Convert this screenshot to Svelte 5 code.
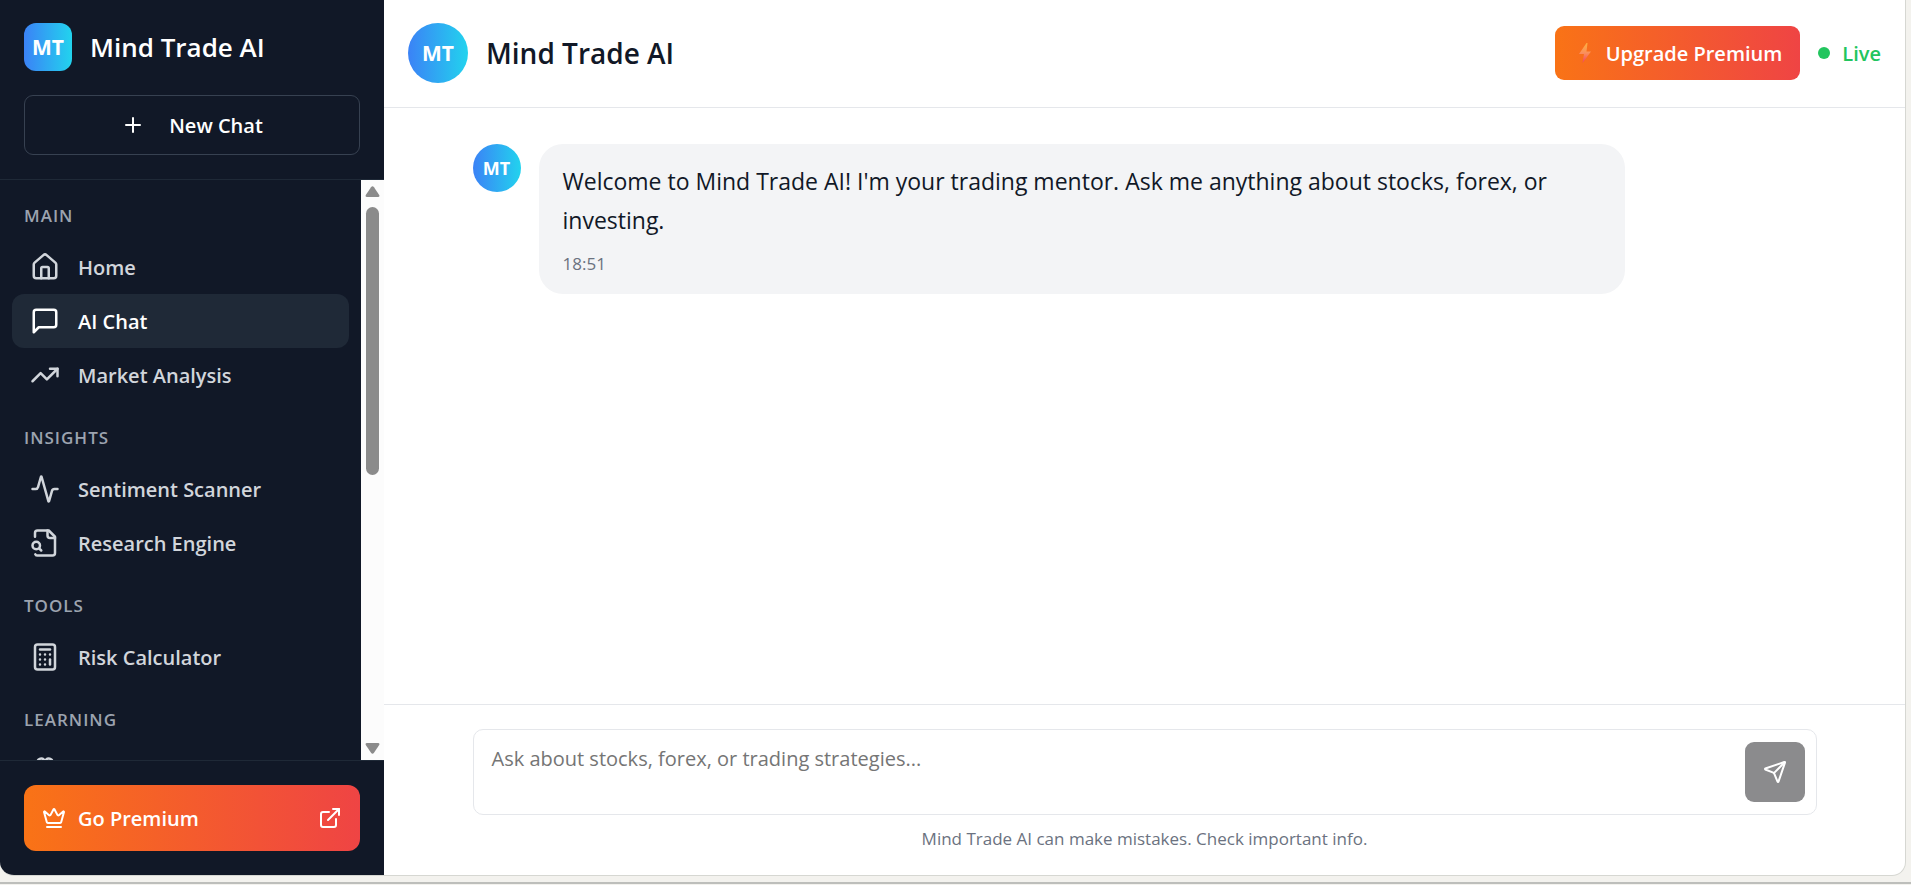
<script lang="ts">
	type Item = { label: string; icon: string };
	type Section = { title: string; items: Item[] };

	const sections: Section[] = [
		{
			title: 'Main',
			items: [
				{ label: 'Home', icon: 'home' },
				{ label: 'AI Chat', icon: 'chat' },
				{ label: 'Market Analysis', icon: 'trending' }
			]
		},
		{
			title: 'Insights',
			items: [
				{ label: 'Sentiment Scanner', icon: 'activity' },
				{ label: 'Research Engine', icon: 'fileSearch' }
			]
		},
		{ title: 'Tools', items: [{ label: 'Risk Calculator', icon: 'calculator' }] },
		{ title: 'Learning', items: [{ label: '', icon: 'brain' }] }
	];

	// stroke paths on a 24x24 grid
	const icons: Record<string, string[]> = {
		home: [
			'M15 21v-8a1 1 0 0 0-1-1h-4a1 1 0 0 0-1 1v8',
			'M3 10a2 2 0 0 1 .709-1.528l7-5.999a2 2 0 0 1 2.582 0l7 5.999A2 2 0 0 1 21 10v9a2 2 0 0 1-2 2H5a2 2 0 0 1-2-2z'
		],
		chat: ['M21 15a2 2 0 0 1-2 2H7l-4 4V5a2 2 0 0 1 2-2h14a2 2 0 0 1 2 2z'],
		trending: ['M22 7l-8.5 8.5-5-5L2 17', 'M16 7h6v6'],
		activity: [
			'M22 12h-2.48a2 2 0 0 0-1.93 1.46l-2.35 8.36a.25.25 0 0 1-.48 0L9.24 2.18a.25.25 0 0 0-.48 0l-2.35 8.36A2 2 0 0 1 4.49 12H2'
		],
		fileSearch: [
			'M14 2v4a2 2 0 0 0 2 2h4',
			'M4.268 21a2 2 0 0 0 1.727 1H18a2 2 0 0 0 2-2V7l-5-5H6a2 2 0 0 0-2 2v3',
			'M9 18l-1.5-1.5',
			'M8 14a3 3 0 1 1-6 0 3 3 0 0 1 6 0z'
		],
		calculator: [
			'M6 2h12a2 2 0 0 1 2 2v16a2 2 0 0 1-2 2H6a2 2 0 0 1-2-2V4a2 2 0 0 1 2-2z',
			'M8 6h8',
			'M16 14v4',
			'M16 10h.01M12 10h.01M8 10h.01M12 14h.01M8 14h.01M12 18h.01M8 18h.01'
		],
		brain: [
			'M12 5a3 3 0 1 0-5.997.125 4 4 0 0 0-2.526 5.77 4 4 0 0 0 .556 6.588A4 4 0 1 0 12 18Z',
			'M12 5a3 3 0 1 1 5.997.125 4 4 0 0 1 2.526 5.77 4 4 0 0 1-.556 6.588A4 4 0 1 1 12 18Z'
		],
		plus: ['M5 12h14', 'M12 5v14'],
		crown: [
			'M11.562 3.266a.5.5 0 0 1 .876 0L15.39 8.87a1 1 0 0 0 1.516.294L21.183 5.5a.5.5 0 0 1 .798.519l-2.834 10.246a1 1 0 0 1-.956.734H5.81a1 1 0 0 1-.957-.734L2.02 6.02a.5.5 0 0 1 .798-.519l4.276 3.664a1 1 0 0 0 1.516-.294z',
			'M5 21h14'
		],
		external: ['M15 3h6v6', 'M10 14 21 3', 'M18 13v6a2 2 0 0 1-2 2H5a2 2 0 0 1-2-2V8a2 2 0 0 1 2-2h6'],
		send: [
			'M14.536 21.686a.5.5 0 0 0 .937-.024l6.5-19a.496.496 0 0 0-.635-.635l-19 6.5a.5.5 0 0 0-.024.937l7.93 3.18a2 2 0 0 1 1.112 1.11z',
			'm21.854 2.147-10.94 10.939'
		]
	};

	let active = $state('AI Chat');
	let draft = $state('');
</script>

{#snippet icon(name: string, size: number)}
	<svg class="icon" width={size} height={size} viewBox="0 0 24 24" aria-hidden="true">
		{#each icons[name] as d}
			<path {d} />
		{/each}
	</svg>
{/snippet}

<div class="page">
	<div class="shell">
		<aside class="sidebar">
			<div class="sidebar-top">
				<div class="brand">
					<span class="logo square">MT</span>
					<span class="brand-name">Mind Trade AI</span>
				</div>
				<button class="new-chat">
					{@render icon('plus', 24)}
					New Chat
				</button>
			</div>

			<div class="nav-wrap">
				<nav>
					{#each sections as section}
						<h2>{section.title}</h2>
						{#each section.items as item}
							<button
								class="nav-item"
								class:active={item.label === active}
								onclick={() => (active = item.label)}
							>
								{@render icon(item.icon, 30)}
								{item.label}
							</button>
						{/each}
					{/each}
				</nav>
				<div class="scrollbar" aria-hidden="true">
					<svg width="15" height="12" viewBox="0 0 15 12">
						<path d="M6 1.2Q7.5-.6 9 1.2L14.2 9Q15 11 13 11H2Q0 11 .8 9z" />
					</svg>
					<div class="track"><div class="thumb"></div></div>
					<svg width="15" height="12" viewBox="0 0 15 12">
						<path d="M6 10.8Q7.5 12.6 9 10.8L14.2 3Q15 1 13 1H2Q0 1 .8 3z" />
					</svg>
				</div>
			</div>

			<div class="sidebar-bottom">
				<button class="go-premium">
					{@render icon('crown', 24)}
					<span>Go Premium</span>
					{@render icon('external', 24)}
				</button>
			</div>
		</aside>

		<main>
			<header>
				<span class="logo large">MT</span>
				<h1>Mind Trade AI</h1>
				<button class="upgrade">
					<svg class="bolt" width="12" height="20" viewBox="0 0 12 20" aria-hidden="true">
						<defs>
							<linearGradient id="bolt" x1="0" y1="0" x2="0" y2="1">
								<stop offset="0" stop-color="#fcb040" />
								<stop offset="0.5" stop-color="#fb8f5c" />
								<stop offset="1" stop-color="#ef3f62" />
							</linearGradient>
						</defs>
						<path d="M7.500 0 0 11h5L3.500 20 12 8.500H7.500L8.500 0z" fill="url(#bolt)" />
					</svg>
					Upgrade Premium
				</button>
				<span class="live"><i></i>Live</span>
			</header>

			<section class="messages">
				<div class="column message">
					<span class="logo small">MT</span>
					<div class="message-body">
						<div class="bubble">
							<p>
								Welcome to Mind Trade AI! I'm your trading mentor. Ask me anything about stocks,
								forex, or investing.
							</p>
							<time>18:51</time>
						</div>
					</div>
				</div>
			</section>

			<footer>
				<form class="column composer" onsubmit={(e) => e.preventDefault()}>
					<textarea
						rows="1"
						aria-label="Message"
						placeholder="Ask about stocks, forex, or trading strategies..."
						bind:value={draft}
					></textarea>
					<button class="send" aria-label="Send message">
						{@render icon('send', 24)}
					</button>
				</form>
				<p class="note">Mind Trade AI can make mistakes. Check important info.</p>
			</footer>
		</main>
	</div>
	<div class="edge"></div>
</div>

<style>
	:global(body) {
		background: #f3f2ee;
		font-family: 'Segoe UI', 'Open Sans', 'Noto Sans', sans-serif;
		color: #111827;
	}

	:global(*) {
		box-sizing: border-box;
	}

	h1,
	h2,
	p {
		margin: 0;
	}

	button,
	textarea {
		font: inherit;
		border: none;
	}

	button {
		display: flex;
		align-items: center;
		cursor: pointer;
	}

	.page {
		display: flex;
		flex-direction: column;
		height: 100vh;
	}

	.shell {
		display: flex;
		flex: 1;
		min-height: 0;
		margin-right: 5px;
		background: #fff;
		border: solid #d6d7d2;
		border-width: 0 1px 1px 0;
		border-radius: 0 0 14px 14px;
		overflow: hidden;
	}

	.edge {
		height: 8px;
		margin-bottom: 1px;
		border-bottom: 2px solid #bdbebb;
	}

	.icon {
		flex: none;
		fill: none;
		stroke: currentColor;
		stroke-width: 2;
		stroke-linecap: round;
		stroke-linejoin: round;
	}

	.logo {
		display: flex;
		flex: none;
		align-items: center;
		justify-content: center;
		width: 48px;
		height: 48px;
		border-radius: 50%;
		background: linear-gradient(to right, #3b82f6, #22d3ee);
		color: #fff;
		font-size: 21px;
		font-weight: 700;
	}

	.logo.square {
		border-radius: 12px;
	}

	.logo.large {
		width: 60px;
		height: 60px;
	}

	.logo.small {
		font-size: 18px;
	}

	/* sidebar */
	.sidebar {
		display: flex;
		flex: none;
		flex-direction: column;
		width: 384px;
		background: #111827;
		color: #fff;
	}

	.sidebar-top {
		padding: 23px 24px 24px;
		border-bottom: 1px solid #1f2937;
	}

	.brand {
		display: flex;
		align-items: center;
		gap: 18px;
	}

	.brand-name {
		font-size: 26px;
		font-weight: 600;
	}

	.new-chat {
		justify-content: center;
		gap: 24px;
		width: 100%;
		height: 60px;
		margin-top: 24px;
		border: 1px solid #374151;
		border-radius: 9px;
		background: transparent;
		color: #fff;
		font-size: 20px;
		font-weight: 600;
	}

	.nav-wrap {
		display: flex;
		flex: 1;
		min-height: 0;
	}

	nav {
		flex: 1;
		padding: 0 12px;
		overflow: hidden;
	}

	h2 {
		padding: 24px 12px 12px;
		color: #9ca3af;
		font-size: 17px;
		font-weight: 600;
		line-height: 24px;
		letter-spacing: 1px;
		text-transform: uppercase;
	}

	.nav-item {
		gap: 18px;
		width: 100%;
		height: 54px;
		padding: 0 18px;
		border-radius: 12px;
		background: transparent;
		color: #d1d5db;
		font-size: 20px;
		font-weight: 600;
	}

	.nav-item.active {
		background: #1f2937;
		color: #fff;
	}

	.scrollbar {
		display: flex;
		flex-direction: column;
		align-items: center;
		width: 23px;
		padding: 6px 0;
		background: #fcfcfc;
		fill: #8b8b8b;
	}

	.track {
		flex: 1;
		padding: 9px 0;
	}

	.thumb {
		width: 13px;
		height: 51%;
		border-radius: 7px;
		background: #8b8b8b;
	}

	.sidebar-bottom {
		padding: 24px;
		border-top: 1px solid #1f2937;
	}

	.go-premium,
	.upgrade {
		background: linear-gradient(to right, #f97316, #ef4444);
		color: #fff;
		font-size: 20px;
		font-weight: 600;
	}

	.go-premium {
		gap: 12px;
		width: 100%;
		height: 66px;
		padding: 0 18px;
		border-radius: 12px;
		text-align: left;
	}

	.go-premium span {
		flex: 1;
	}

	/* chat */
	main {
		display: flex;
		flex: 1;
		flex-direction: column;
		min-width: 0;
	}

	header {
		display: flex;
		align-items: center;
		padding: 23px 24px 24px;
		border-bottom: 1px solid #e5e7eb;
	}

	h1 {
		flex: 1;
		margin-left: 18px;
		font-size: 28px;
		font-weight: 600;
		line-height: 42px;
	}

	.upgrade {
		gap: 15px;
		height: 54px;
		padding: 0 18px 0 24px;
		border-radius: 9px;
	}

	.live {
		display: flex;
		align-items: center;
		gap: 12px;
		margin-left: 18px;
		color: #22c55e;
		font-size: 20px;
		font-weight: 600;
	}

	.live i {
		width: 12px;
		height: 12px;
		border-radius: 50%;
		background: #22c55e;
	}

	.messages {
		flex: 1;
		padding: 36px 24px;
		overflow: hidden;
	}

	.column {
		max-width: 1344px;
		margin: 0 auto;
	}

	.message {
		display: flex;
		gap: 18px;
	}

	.message-body {
		flex: 1;
	}

	.bubble {
		width: fit-content;
		max-width: 85%;
		padding: 18px 24px;
		border-radius: 24px;
		background: #f3f4f6;
		font-size: 23px;
		line-height: 39px;
	}

	time {
		display: block;
		margin-top: 12px;
		color: #6b7280;
		font-size: 17px;
		line-height: 24px;
	}

	footer {
		padding: 24px;
		border-top: 1px solid #e5e7eb;
	}

	.composer {
		display: flex;
		align-items: center;
		height: 86px;
		padding-right: 11px;
		border: 1px solid #e5e7eb;
		border-radius: 10px;
	}

	textarea {
		flex: 1;
		align-self: stretch;
		padding: 14px 18px;
		background: transparent;
		color: #111827;
		font-size: 20px;
		line-height: 30px;
		resize: none;
		outline: none;
	}

	textarea::placeholder {
		color: #757575;
	}

	.send {
		justify-content: center;
		width: 60px;
		height: 60px;
		padding: 0;
		border-radius: 9px;
		background: #8b8b8d;
		color: #fff;
	}

	.note {
		margin-top: 12px;
		color: #6b7280;
		font-size: 17px;
		line-height: 24px;
		text-align: center;
	}
</style>
